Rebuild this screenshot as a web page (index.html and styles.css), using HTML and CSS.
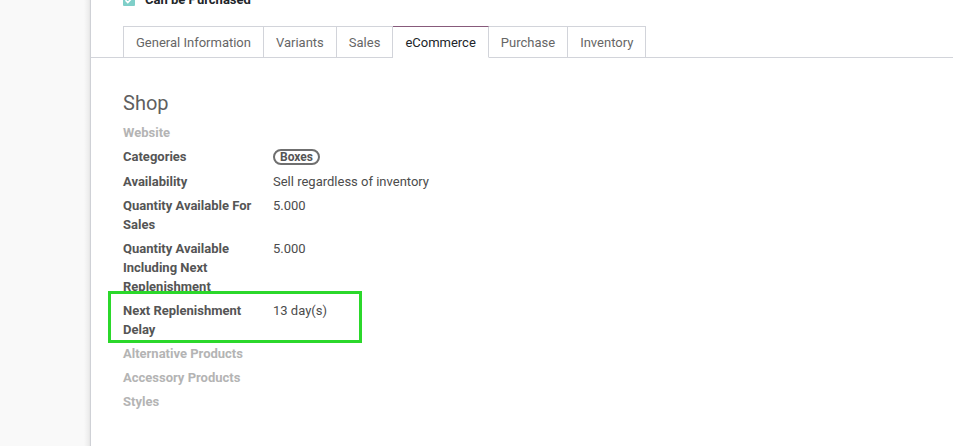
FILE: index.html
```html
<!DOCTYPE html>
<html>
<head>
<meta charset="utf-8">
<link rel="stylesheet" href="styles.css">
</head>
<body>
<div class="app">
  <div class="side"></div>
  <div class="sheet">
    <div class="top">
      <span class="check"><svg width="12" height="12" viewBox="0 0 12 12"><rect width="12" height="12" rx="1" fill="#7fcfc9"/><path d="M2.5 6.2l2.3 2.3 4.7-4.9" stroke="#fff" stroke-width="1.6" fill="none"/></svg></span>
      <span class="check-label">Can be Purchased</span>
    </div>
    <ul class="tabs">
      <li class="tab">General Information</li>
      <li class="tab">Variants</li>
      <li class="tab">Sales</li>
      <li class="tab active">eCommerce</li>
      <li class="tab">Purchase</li>
      <li class="tab">Inventory</li>
    </ul>
    <div class="content">
      <h2 class="sep">Shop</h2>
      <div class="fields">
        <div class="lbl muted">Website</div><div class="val"></div>
        <div class="lbl tall">Categories</div><div class="val tall"><span class="tag">Boxes</span></div>
        <div class="lbl">Availability</div><div class="val">Sell regardless of inventory</div>
        <div class="lbl">Quantity Available For Sales</div><div class="val">5.000</div>
        <div class="lbl">Quantity Available Including Next Replenishment</div><div class="val">5.000</div>
        <div class="lbl hl">Next Replenishment Delay<span class="mark"></span></div><div class="val">13 day(s)</div>
        <div class="lbl muted">Alternative Products</div><div class="val"></div>
        <div class="lbl muted">Accessory Products</div><div class="val"></div>
        <div class="lbl muted">Styles</div><div class="val"></div>
      </div>
    </div>
  </div>
</div>
</body>
</html>
```
FILE: styles.css
```css
html, body { margin: 0; padding: 0; }
body {
  font-family: Roboto, "Liberation Sans", sans-serif;
  font-size: 13px;
  color: #4c4c4c;
  background: #fff;
  overflow: hidden;
}
.app { display: flex; height: 446px; }
.side {
  width: 90px;
  flex: none;
  background: linear-gradient(to right, #f9f9f9 0, #f9f9f9 84px, #ececec 89px, #e2e2e2 90px);
}
.sheet {
  flex: 1;
  border-left: 1px solid #cfd1d6;
  background: #fff;
}
.top {
  display: flex;
  align-items: center;
  gap: 10px;
  padding-left: 32px;
  height: 12px;
  margin-top: -6px;
  line-height: 12px;
}
.check { display: flex; width: 12px; height: 12px; }
.check-label { font-weight: 700; color: #212529; font-size: 13px; }
.tabs {
  list-style: none;
  margin: 20px 0 0 0;
  padding: 0 0 0 32px;
  display: flex;
  border-bottom: 1px solid #d2d4da;
}
.tab {
  height: 30px;
  line-height: 31px;
  padding: 0 12px;
  border: 1px solid #d2d4da;
  border-left-width: 0;
  margin-bottom: -1px;
  color: #666;
  background: #fff;
}
.tab:first-child { border-left-width: 1px; }
.tab.active {
  color: #212529;
  border-top-color: #875a7b;
  border-bottom-color: #fff;
}
.content { padding: 0 0 0 32px; }
.sep {
  margin: 33px 0 8px 0;
  font-size: 20px;
  font-weight: 400;
  line-height: 24px;
  color: #5f5f5f;
}
.fields {
  display: grid;
  grid-template-columns: 150px auto;
  row-gap: 5px;
  line-height: 19px;
}
.lbl {
  font-weight: 700;
  padding-right: 15px;
  color: #555;
}
.tall { line-height: 20px; }
.lbl.muted { color: #b4b4b4; }
.val { color: #4c4c4c; }
.hl { position: relative; }
.mark {
  position: absolute;
  left: -15px;
  top: -10px;
  width: 254px;
  height: 52px;
  box-sizing: border-box;
  border: 3px solid #2bd82b;
}
.tag {
  display: inline-block;
  border: 2px solid #6f6f6f;
  border-radius: 9px;
  padding: 0 5px;
  font-weight: 700;
  font-size: 12px;
  line-height: 12px;
  color: #555;
}
```
